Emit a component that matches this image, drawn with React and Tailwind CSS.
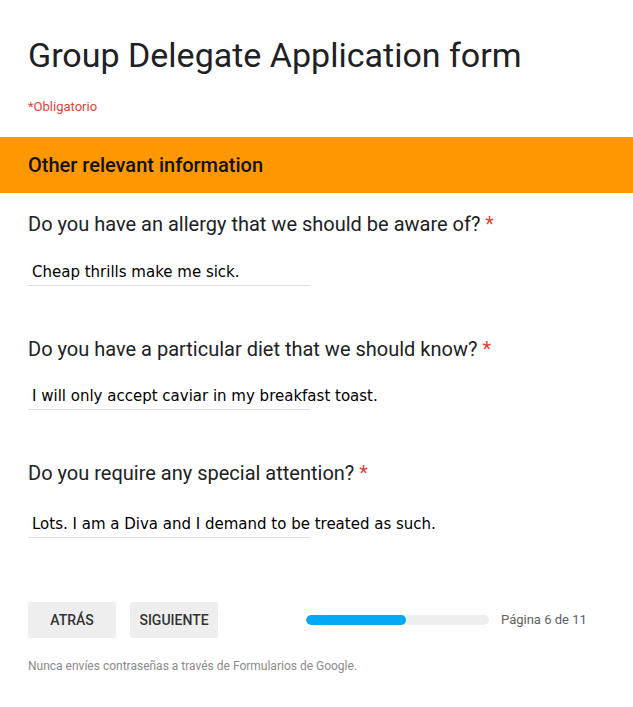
import React from "react";

const questions = [
  {
    label: "Do you have an allergy that we should be aware of?",
    answer: "Cheap thrills make me sick.",
    gap: "mt-[26px]",
  },
  {
    label: "Do you have a particular diet that we should know?",
    answer: "I will only accept caviar in my breakfast toast.",
    gap: "mt-[25px]",
  },
  {
    label: "Do you require any special attention?",
    answer: "Lots. I am a Diva and I demand to be treated as such.",
    gap: "mt-[29px]",
  },
];

const App = () => {
  const page = 6;
  const total = 11;

  return (
    <div className="min-h-[707px] bg-white font-['Roboto',sans-serif] text-[#202124]">
      {/* Header */}
      <div className="px-7 pt-[35px] pb-[22px]">
        <h1 className="text-[34px] leading-[40px] font-normal">
          Group Delegate Application form
        </h1>
        <p className="mt-[24px] text-[13px] leading-4 text-[#db4437]">*Obligatorio</p>
      </div>

      {/* Section band */}
      <div className="bg-[#ff9800] h-[56px] px-7 flex items-center">
        <h2 className="text-[20px] font-medium text-[#111]">Other relevant information</h2>
      </div>

      {/* Questions */}
      <div className="px-7 pt-[19px] flex flex-col gap-[51px]">
        {questions.map((q, i) => (
          <div key={i}>
            <div className="text-[20px] leading-6">
              {q.label} <span className="text-[#db4437]">*</span>
            </div>
            <div className={`${q.gap} w-[282px]`}>
              <div className="pl-[4px] pb-[3px] whitespace-nowrap font-['DejaVu_Sans',sans-serif] text-[15px] leading-5 text-black">
                {q.answer}
              </div>
              <div className="h-px bg-[#e0e0e0]" />
            </div>
          </div>
        ))}
      </div>

      {/* Navigation */}
      <div className="px-7 mt-[64px] flex items-center">
        <button className="w-[88px] h-[36px] rounded-[2px] bg-[#eeeeee] text-[14px] font-medium text-[#333] uppercase">
          Atrás
        </button>
        <button className="ml-[14px] w-[88px] h-[36px] rounded-[2px] bg-[#eeeeee] text-[14px] font-medium text-[#333] uppercase">
          Siguiente
        </button>
        <div className="ml-[88px] w-[183px] h-[10px] rounded-full bg-[#eeeeee] overflow-hidden">
          <div
            className="h-full rounded-full bg-[#03a9f4]"
            style={{ width: `${(page / total) * 100}%` }}
          />
        </div>
        <span className="ml-[12px] text-[13px] text-[#616161]">
          Página {page} de {total}
        </span>
      </div>

      <p className="px-7 mt-[20px] text-[12px] leading-4 text-[#8a8a8a]">
        Nunca envíes contraseñas a través de Formularios de Google.
      </p>
    </div>
  );
};

export default App;
